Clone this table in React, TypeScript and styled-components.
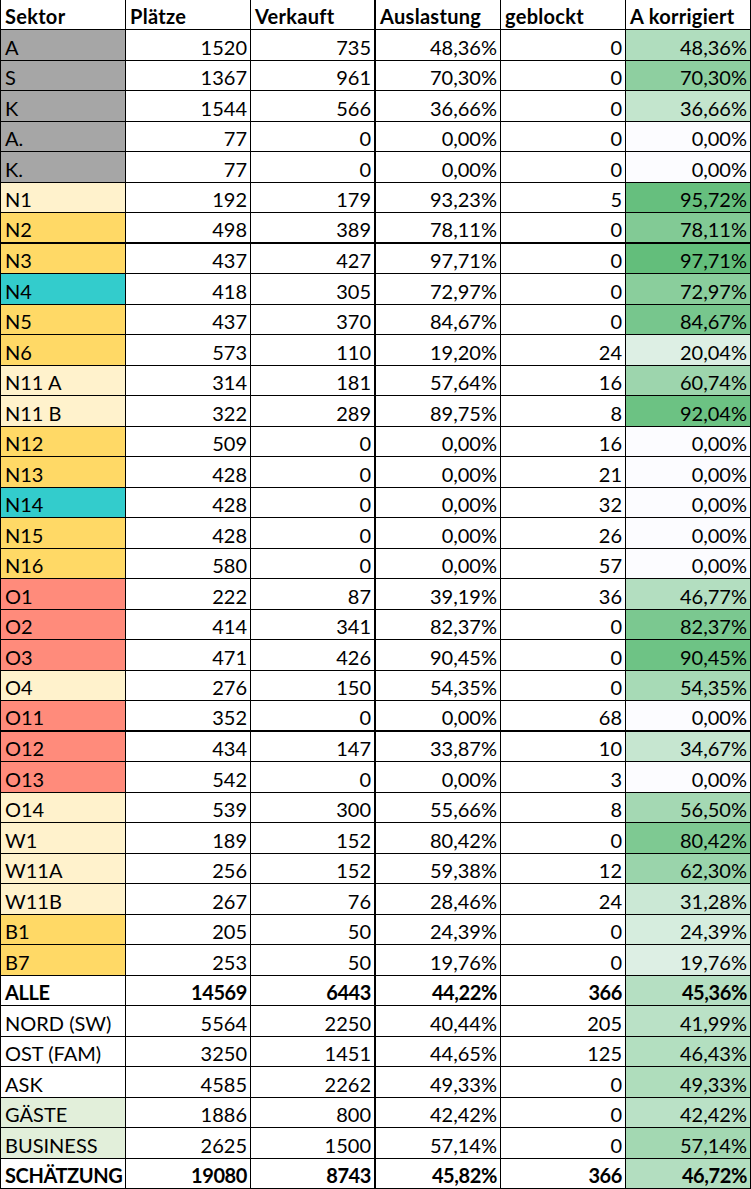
import React from 'react';
import styled, { createGlobalStyle } from 'styled-components';

const GlobalStyle = createGlobalStyle`
  html, body {
    margin: 0;
    padding: 0;
    background: #ffffff;
  }
`;

const GRAY = '#a6a6a6';
const CREAM = '#fff2cc';
const GOLD = '#ffd966';
const TEAL = '#33cccc';
const SALMON = '#ff8b7b';
const MINT = '#e2efda';

type Row = {
  sektor: string;
  color?: string;
  plaetze: number;
  verkauft: number;
  auslastung: string;
  geblockt: number;
  korrigiert: string;
  bold?: boolean;
  thick?: boolean;
};

const rows: Row[] = [
  { sektor: 'A', color: GRAY, plaetze: 1520, verkauft: 735, auslastung: '48,36%', geblockt: 0, korrigiert: '48,36%' },
  { sektor: 'S', color: GRAY, plaetze: 1367, verkauft: 961, auslastung: '70,30%', geblockt: 0, korrigiert: '70,30%' },
  { sektor: 'K', color: GRAY, plaetze: 1544, verkauft: 566, auslastung: '36,66%', geblockt: 0, korrigiert: '36,66%' },
  { sektor: 'A.', color: GRAY, plaetze: 77, verkauft: 0, auslastung: '0,00%', geblockt: 0, korrigiert: '0,00%' },
  { sektor: 'K.', color: GRAY, plaetze: 77, verkauft: 0, auslastung: '0,00%', geblockt: 0, korrigiert: '0,00%' },
  { sektor: 'N1', color: CREAM, plaetze: 192, verkauft: 179, auslastung: '93,23%', geblockt: 5, korrigiert: '95,72%' },
  { sektor: 'N2', color: GOLD, plaetze: 498, verkauft: 389, auslastung: '78,11%', geblockt: 0, korrigiert: '78,11%', thick: true },
  { sektor: 'N3', color: GOLD, plaetze: 437, verkauft: 427, auslastung: '97,71%', geblockt: 0, korrigiert: '97,71%' },
  { sektor: 'N4', color: TEAL, plaetze: 418, verkauft: 305, auslastung: '72,97%', geblockt: 0, korrigiert: '72,97%' },
  { sektor: 'N5', color: GOLD, plaetze: 437, verkauft: 370, auslastung: '84,67%', geblockt: 0, korrigiert: '84,67%' },
  { sektor: 'N6', color: GOLD, plaetze: 573, verkauft: 110, auslastung: '19,20%', geblockt: 24, korrigiert: '20,04%' },
  { sektor: 'N11 A', color: CREAM, plaetze: 314, verkauft: 181, auslastung: '57,64%', geblockt: 16, korrigiert: '60,74%' },
  { sektor: 'N11 B', color: CREAM, plaetze: 322, verkauft: 289, auslastung: '89,75%', geblockt: 8, korrigiert: '92,04%' },
  { sektor: 'N12', color: GOLD, plaetze: 509, verkauft: 0, auslastung: '0,00%', geblockt: 16, korrigiert: '0,00%' },
  { sektor: 'N13', color: GOLD, plaetze: 428, verkauft: 0, auslastung: '0,00%', geblockt: 21, korrigiert: '0,00%' },
  { sektor: 'N14', color: TEAL, plaetze: 428, verkauft: 0, auslastung: '0,00%', geblockt: 32, korrigiert: '0,00%' },
  { sektor: 'N15', color: GOLD, plaetze: 428, verkauft: 0, auslastung: '0,00%', geblockt: 26, korrigiert: '0,00%' },
  { sektor: 'N16', color: GOLD, plaetze: 580, verkauft: 0, auslastung: '0,00%', geblockt: 57, korrigiert: '0,00%' },
  { sektor: 'O1', color: SALMON, plaetze: 222, verkauft: 87, auslastung: '39,19%', geblockt: 36, korrigiert: '46,77%' },
  { sektor: 'O2', color: SALMON, plaetze: 414, verkauft: 341, auslastung: '82,37%', geblockt: 0, korrigiert: '82,37%' },
  { sektor: 'O3', color: SALMON, plaetze: 471, verkauft: 426, auslastung: '90,45%', geblockt: 0, korrigiert: '90,45%' },
  { sektor: 'O4', color: CREAM, plaetze: 276, verkauft: 150, auslastung: '54,35%', geblockt: 0, korrigiert: '54,35%' },
  { sektor: 'O11', color: SALMON, plaetze: 352, verkauft: 0, auslastung: '0,00%', geblockt: 68, korrigiert: '0,00%', thick: true },
  { sektor: 'O12', color: SALMON, plaetze: 434, verkauft: 147, auslastung: '33,87%', geblockt: 10, korrigiert: '34,67%' },
  { sektor: 'O13', color: SALMON, plaetze: 542, verkauft: 0, auslastung: '0,00%', geblockt: 3, korrigiert: '0,00%' },
  { sektor: 'O14', color: CREAM, plaetze: 539, verkauft: 300, auslastung: '55,66%', geblockt: 8, korrigiert: '56,50%' },
  { sektor: 'W1', color: CREAM, plaetze: 189, verkauft: 152, auslastung: '80,42%', geblockt: 0, korrigiert: '80,42%' },
  { sektor: 'W11A', color: CREAM, plaetze: 256, verkauft: 152, auslastung: '59,38%', geblockt: 12, korrigiert: '62,30%' },
  { sektor: 'W11B', color: CREAM, plaetze: 267, verkauft: 76, auslastung: '28,46%', geblockt: 24, korrigiert: '31,28%' },
  { sektor: 'B1', color: GOLD, plaetze: 205, verkauft: 50, auslastung: '24,39%', geblockt: 0, korrigiert: '24,39%' },
  { sektor: 'B7', color: GOLD, plaetze: 253, verkauft: 50, auslastung: '19,76%', geblockt: 0, korrigiert: '19,76%' },
  { sektor: 'ALLE', plaetze: 14569, verkauft: 6443, auslastung: '44,22%', geblockt: 366, korrigiert: '45,36%', bold: true },
  { sektor: 'NORD (SW)', plaetze: 5564, verkauft: 2250, auslastung: '40,44%', geblockt: 205, korrigiert: '41,99%' },
  { sektor: 'OST (FAM)', plaetze: 3250, verkauft: 1451, auslastung: '44,65%', geblockt: 125, korrigiert: '46,43%' },
  { sektor: 'ASK', plaetze: 4585, verkauft: 2262, auslastung: '49,33%', geblockt: 0, korrigiert: '49,33%' },
  { sektor: 'GÄSTE', color: MINT, plaetze: 1886, verkauft: 800, auslastung: '42,42%', geblockt: 0, korrigiert: '42,42%' },
  { sektor: 'BUSINESS', color: MINT, plaetze: 2625, verkauft: 1500, auslastung: '57,14%', geblockt: 0, korrigiert: '57,14%' },
  { sektor: 'SCHÄTZUNG', plaetze: 19080, verkauft: 8743, auslastung: '45,82%', geblockt: 366, korrigiert: '46,72%', bold: true },
];

const headers = ['Sektor', 'Plätze', 'Verkauft', 'Auslastung', 'geblockt', 'A korrigiert'];

// excel style 2-colour scale, white -> green
const MAX = 97.71;
const scale = (pct: string) => {
  const v = parseFloat(pct.replace(',', '.').replace('%', ''));
  const t = Math.max(0, Math.min(1, v / MAX));
  const mix = (a: number, b: number) => Math.round(a + (b - a) * t);
  return `rgb(${mix(252, 99)}, ${mix(252, 190)}, ${mix(255, 123)})`;
};

const Sheet = styled.div`
  display: grid;
  grid-template-columns: repeat(6, 125px);
  grid-template-rows: repeat(39, 1fr);
  width: 751px;
  height: 1189px;
  box-sizing: border-box;
  border-left: 1px solid #000;
  font-family: Lato, 'Open Sans', sans-serif;
  font-size: 20px;
  color: #000;
`;

const Cell = styled.div<{
  $right?: boolean;
  $bg?: string;
  $bold?: boolean;
  $thickRight?: boolean;
  $thickBottom?: boolean;
}>`
  display: flex;
  align-items: flex-end;
  justify-content: ${(p) => (p.$right ? 'flex-end' : 'flex-start')};
  box-sizing: border-box;
  min-height: 0;
  padding: 0 3px 1px 4px;
  line-height: 24px;
  white-space: nowrap;
  overflow: hidden;
  background: ${(p) => p.$bg || '#ffffff'};
  font-weight: ${(p) => (p.$bold ? 700 : 400)};
  letter-spacing: ${(p) => (p.$bold ? '-0.4px' : '0')};
  border-right: ${(p) => (p.$thickRight ? '2px' : '1px')} solid #000;
  border-bottom: ${(p) => (p.$thickBottom ? '2px' : '1px')} solid #000;
`;

const HeaderCell = styled(Cell)`
  font-weight: 700;
  letter-spacing: 0.3px;
`;

export default function App() {
  return (
    <>
      <GlobalStyle />
      <Sheet>
        {headers.map((h, i) => (
          <HeaderCell key={h} $thickRight={i === 2}>
            {h}
          </HeaderCell>
        ))}
        {rows.map((r) => (
          <React.Fragment key={r.sektor}>
            <Cell $bg={r.color} $bold={r.bold} $thickBottom={r.thick}>
              {r.sektor}
            </Cell>
            <Cell $right $bold={r.bold} $thickBottom={r.thick}>
              {r.plaetze}
            </Cell>
            <Cell $right $bold={r.bold} $thickBottom={r.thick} $thickRight>
              {r.verkauft}
            </Cell>
            <Cell $right $bold={r.bold} $thickBottom={r.thick}>
              {r.auslastung}
            </Cell>
            <Cell $right $bold={r.bold} $thickBottom={r.thick}>
              {r.geblockt}
            </Cell>
            <Cell $right $bold={r.bold} $thickBottom={r.thick} $bg={scale(r.korrigiert)}>
              {r.korrigiert}
            </Cell>
          </React.Fragment>
        ))}
      </Sheet>
    </>
  );
}
